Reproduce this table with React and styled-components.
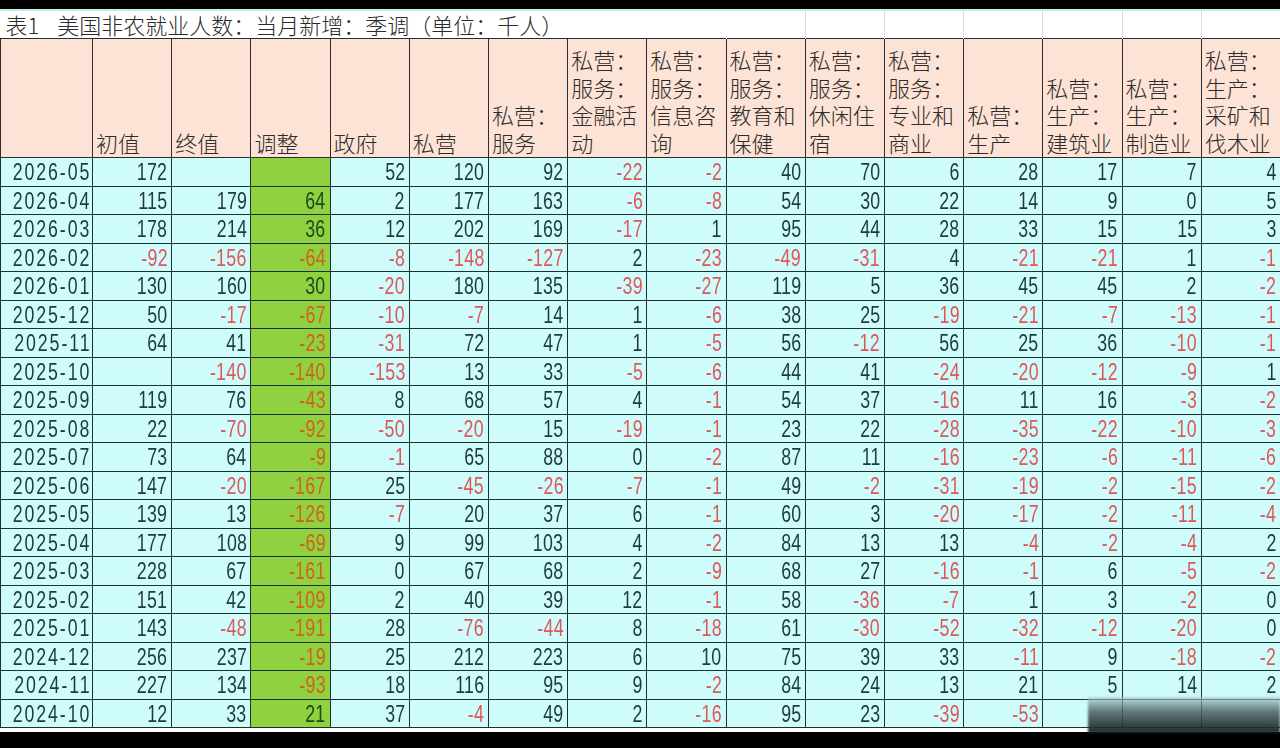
import React from "react";
import styled, { createGlobalStyle } from "styled-components";

const GlobalStyle = createGlobalStyle`
  html, body {
    margin: 0;
    padding: 0;
    background: #000;
    width: 1280px;
    height: 748px;
    overflow: hidden;
  }
`;

const headers = [
  ["初值"],
  ["终值"],
  ["调整"],
  ["政府"],
  ["私营"],
  ["私营：", "服务"],
  ["私营：", "服务：", "金融活", "动"],
  ["私营：", "服务：", "信息咨", "询"],
  ["私营：", "服务：", "教育和", "保健"],
  ["私营：", "服务：", "休闲住", "宿"],
  ["私营：", "服务：", "专业和", "商业"],
  ["私营：", "生产"],
  ["私营：", "生产：", "建筑业"],
  ["私营：", "生产：", "制造业"],
  ["私营：", "生产：", "采矿和", "伐木业"],
];

const rows = [
  ["2026-05", 172, "", "", 52, 120, 92, -22, -2, 40, 70, 6, 28, 17, 7, 4],
  ["2026-04", 115, 179, 64, 2, 177, 163, -6, -8, 54, 30, 22, 14, 9, 0, 5],
  ["2026-03", 178, 214, 36, 12, 202, 169, -17, 1, 95, 44, 28, 33, 15, 15, 3],
  ["2026-02", -92, -156, -64, -8, -148, -127, 2, -23, -49, -31, 4, -21, -21, 1, -1],
  ["2026-01", 130, 160, 30, -20, 180, 135, -39, -27, 119, 5, 36, 45, 45, 2, -2],
  ["2025-12", 50, -17, -67, -10, -7, 14, 1, -6, 38, 25, -19, -21, -7, -13, -1],
  ["2025-11", 64, 41, -23, -31, 72, 47, 1, -5, 56, -12, 56, 25, 36, -10, -1],
  ["2025-10", "", -140, -140, -153, 13, 33, -5, -6, 44, 41, -24, -20, -12, -9, 1],
  ["2025-09", 119, 76, -43, 8, 68, 57, 4, -1, 54, 37, -16, 11, 16, -3, -2],
  ["2025-08", 22, -70, -92, -50, -20, 15, -19, -1, 23, 22, -28, -35, -22, -10, -3],
  ["2025-07", 73, 64, -9, -1, 65, 88, 0, -2, 87, 11, -16, -23, -6, -11, -6],
  ["2025-06", 147, -20, -167, 25, -45, -26, -7, -1, 49, -2, -31, -19, -2, -15, -2],
  ["2025-05", 139, 13, -126, -7, 20, 37, 6, -1, 60, 3, -20, -17, -2, -11, -4],
  ["2025-04", 177, 108, -69, 9, 99, 103, 4, -2, 84, 13, 13, -4, -2, -4, 2],
  ["2025-03", 228, 67, -161, 0, 67, 68, 2, -9, 68, 27, -16, -1, 6, -5, -2],
  ["2025-02", 151, 42, -109, 2, 40, 39, 12, -1, 58, -36, -7, 1, 3, -2, 0],
  ["2025-01", 143, -48, -191, 28, -76, -44, 8, -18, 61, -30, -52, -32, -12, -20, 0],
  ["2024-12", 256, 237, -19, 25, 212, 223, 6, 10, 75, 39, 33, -11, 9, -18, -2],
  ["2024-11", 227, 134, -93, 18, 116, 95, 9, -2, 84, 24, 13, 21, 5, 14, 2],
  ["2024-10", 12, 33, 21, 37, -4, 49, 2, -16, 95, 23, -39, -53, "", "", ""],
];

const CJK = `"Noto Sans CJK SC", sans-serif`;

const Screen = styled.div`
  width: 1280px;
  height: 748px;
  background: #000;
  padding-top: 9px;
  box-sizing: border-box;
  position: relative;
`;

const Sheet = styled.div`
  background: #fff;
  border-top: 2px solid #bfeff0;
  padding-bottom: 4px;
`;

const Table = styled.table`
  border-collapse: collapse;
  table-layout: fixed;
  width: 1280px;
  font-family: "Liberation Sans", ${CJK};
  color: #1f3a3a;
`;

const TitleCell = styled.td`
  height: 27px;
  padding: 0 0 0 5px;
  font-size: 22px;
  font-family: ${CJK};
  font-weight: 300;
  color: #2a2a2a;
  white-space: nowrap;
  overflow: visible;
  border-right: 1px solid ${(p) => (p.$grid ? "#dcdcdc" : "transparent")};
  vertical-align: middle;
  line-height: 27px;
`;

const Gap = styled.span`
  display: inline-block;
  width: 18px;
`;

const HeadCell = styled.th`
  height: 117px;
  background: #fde3d5;
  border: 1px solid #2c2c2c;
  vertical-align: bottom;
  text-align: left;
  padding: 0 0 1px 3px;
  font-family: ${CJK};
  font-weight: 300;
  font-size: 22px;
  line-height: 27.5px;
  color: #2c2c2c;
  white-space: nowrap;
  overflow: hidden;
`;

const HeadLine = styled.div`
  height: 27.5px;
`;

const Cell = styled.td`
  height: 27.5px;
  padding: 0 4px 0 0;
  border: 1px solid #1e3030;
  background: ${(p) => (p.$green ? "#8fd13f" : "#cdfcfb")};
  font-size: 24px;
  line-height: 27px;
  white-space: nowrap;
  overflow: hidden;
  color: ${(p) =>
    p.$neg ? (p.$green ? "#d2601e" : "#e0575a") : p.$green ? "#1d4a1d" : "#1f3a3a"};
`;

const RightAlign = styled.div`
  display: flex;
  justify-content: flex-end;
`;

const Num = styled.span`
  flex: none;
  display: inline-block;
  transform: scaleX(0.74);
  transform-origin: right center;
  letter-spacing: ${(p) => (p.$date ? "2.6px" : "0.4px")};
  margin-right: ${(p) => (p.$date ? "-2.6px" : "-0.4px")};
`;

const DateCell = styled(Cell)`
  padding-right: 3px;
`;

const Smudge = styled.div`
  position: absolute;
  left: 1088px;
  top: 697px;
  width: 192px;
  height: 36px;
  background: linear-gradient(180deg, rgba(175, 205, 205, 0.6) 0%, rgba(80, 100, 100, 0.85) 40%, rgba(20, 30, 30, 0.95) 100%);
  filter: blur(1px);
`;

const fmt = (v) => (v === "" ? "" : String(v));

export default function App() {
  return (
    <>
      <GlobalStyle />
      <Screen>
        <Sheet>
          <Table>
            <colgroup>
              <col style={{ width: 92 }} />
              {headers.map((_, i) => (
                <col key={i} style={{ width: 79.2 }} />
              ))}
            </colgroup>
            <tbody>
              <tr>
                <TitleCell colSpan={9}>
                  表1<Gap />美国非农就业人数：当月新增：季调（单位：千人）
                </TitleCell>
                {headers.slice(8).map((_, i) => (
                  <TitleCell key={i} $grid />
                ))}
              </tr>
              <tr>
                <HeadCell />
                {headers.map((h, i) => (
                  <HeadCell key={i}>
                    {h.map((line, j) => (
                      <HeadLine key={j}>{line}</HeadLine>
                    ))}
                  </HeadCell>
                ))}
              </tr>
              {rows.map((r) => (
                <tr key={r[0]}>
                  <DateCell>
                    <RightAlign>
                      <Num $date>{r[0]}</Num>
                    </RightAlign>
                  </DateCell>
                  {r.slice(1).map((v, i) => (
                    <Cell key={i} $green={i === 2} $neg={typeof v === "number" && v < 0}>
                      <RightAlign>
                        <Num>{fmt(v)}</Num>
                      </RightAlign>
                    </Cell>
                  ))}
                </tr>
              ))}
            </tbody>
          </Table>
        </Sheet>
        <Smudge />
      </Screen>
    </>
  );
}
